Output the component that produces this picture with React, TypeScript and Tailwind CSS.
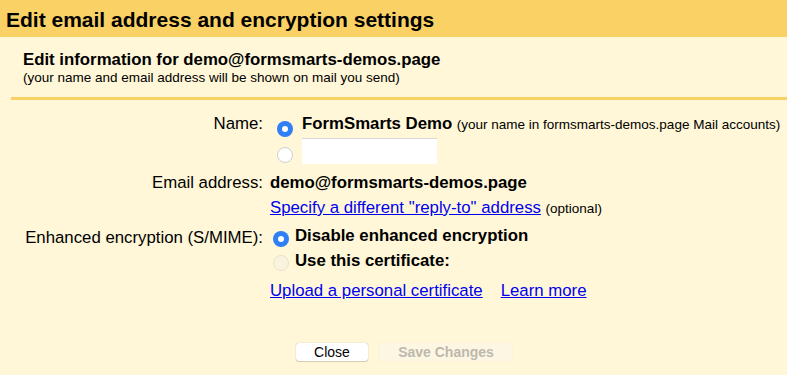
import React from "react";

function Radio({ checked, disabled }: { checked?: boolean; disabled?: boolean }) {
  if (checked) {
    return (
      <div className="w-[16px] h-[16px] rounded-full bg-[#2f7ff6] flex items-center justify-center shrink-0">
        <div className="w-[6px] h-[6px] rounded-full bg-white" />
      </div>
    );
  }
  if (disabled) {
    return <div className="w-[16px] h-[16px] rounded-full bg-[#faf3de] border border-[#e9e2cd] shrink-0" />;
  }
  return <div className="w-[16px] h-[16px] rounded-full bg-white border border-[#cfcfcf] shrink-0" />;
}

export default function App() {
  return (
    <div
      className="w-[787px] h-[375px] bg-[#fff7d8] text-black overflow-hidden"
      style={{ fontFamily: '"Liberation Sans", Arial, sans-serif' }}
    >
      <div className="h-[37px] bg-[#fad164] pl-[6px] pt-[8px]">
        <div className="text-[21px] leading-[24px] font-bold">Edit email address and encryption settings</div>
      </div>
      <div className="pl-[23px] pt-[13px]">
        <div className="text-[16.8px] leading-[20px] font-bold">Edit information for demo@formsmarts-demos.page</div>
        <div className="text-[13.5px] leading-[16px]">(your name and email address will be shown on mail you send)</div>
      </div>
      <div className="ml-[11px] mt-[11px] h-[3px] bg-[#fad164]" />

      <div className="mt-[14px] text-[16.8px] leading-[20px]">
        {/* Name row */}
        <div className="flex items-start h-[24px]">
          <div className="w-[263px] text-right">Name:</div>
          <div className="ml-[14px] mt-[7px]"><Radio checked /></div>
          <div className="ml-[9px] whitespace-nowrap">
            <span className="font-bold">FormSmarts Demo</span>{" "}
            <span className="text-[13.5px]">(your name in formsmarts-demos.page Mail accounts)</span>
          </div>
        </div>
        {/* second name row */}
        <div className="flex items-start h-[35px]">
          <div className="w-[263px]" />
          <div className="ml-[14px] mt-[9px]"><Radio /></div>
          <div className="ml-[9px] w-[135px] h-[26px] bg-white border-t border-[#d8d8d8]" />
        </div>
        {/* Email row */}
        <div className="flex items-start h-[25px]">
          <div className="w-[263px] text-right">Email address:</div>
          <div className="ml-[7px] font-bold">demo@formsmarts-demos.page</div>
        </div>
        <div className="flex items-start h-[28px]">
          <div className="w-[263px]" />
          <div className="ml-[7px] whitespace-nowrap">
            <a className="text-[#0000ee] underline">Specify a different "reply-to" address</a>{" "}
            <span className="text-[13.5px]">(optional)</span>
          </div>
        </div>
        {/* Encryption */}
        <div className="flex items-start h-[25px]">
          <div className="w-[263px] text-right mt-[2px]">Enhanced encryption (S/MIME):</div>
          <div className="ml-[10px] mt-[5px]"><Radio checked /></div>
          <div className="ml-[6px] font-bold">Disable enhanced encryption</div>
        </div>
        <div className="flex items-start h-[30px]">
          <div className="w-[263px]" />
          <div className="ml-[10px] mt-[4px]"><Radio disabled /></div>
          <div className="ml-[6px] font-bold">Use this certificate:</div>
        </div>
        <div className="flex items-start h-[20px]">
          <div className="w-[263px]" />
          <div className="ml-[7px] whitespace-nowrap">
            <a className="text-[#0000ee] underline">Upload a personal certificate</a>
            <a className="text-[#0000ee] underline ml-[18px]">Learn more</a>
          </div>
        </div>
      </div>

      <div className="mt-[42px] flex pl-[296px] gap-[11px]">
        <button className="w-[72px] h-[18px] bg-white rounded-[3px] shadow-[0_0_1px_rgba(0,0,0,0.35),0_1px_1px_rgba(0,0,0,0.15)] text-[14px] leading-[18px] text-black">
          Close
        </button>
        <button className="w-[134px] h-[18px] bg-[#fdf6e2] rounded-[3px] shadow-[0_0_1px_rgba(0,0,0,0.12)] text-[14px] leading-[18px] font-bold text-[#bdb9ad]">
          Save Changes
        </button>
      </div>
    </div>
  );
}
